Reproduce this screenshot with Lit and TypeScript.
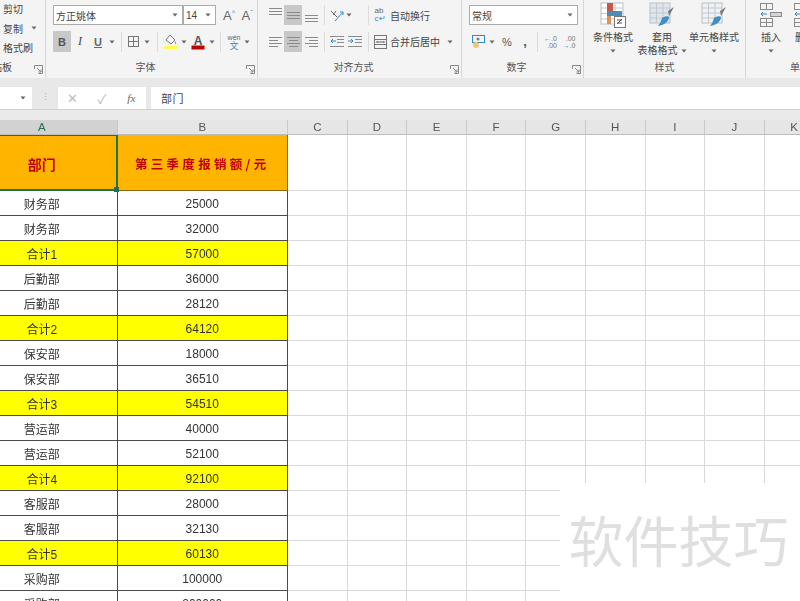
import { LitElement, html, svg, css } from "lit";
import { customElement } from "lit/decorators.js";

const caret = html`<svg width="6" height="4" viewBox="0 0 6 4"><path d="M0.5 0.5h5L3 3.5z" fill="#666"/></svg>`;
const launcher = html`<svg width="9" height="9" viewBox="0 0 9 9" fill="none" stroke="#888"><path d="M0.5 4V0.5H8.5V8.5H4.500"/><path d="M3 3l4 4M7 4.500V7H4.500"/></svg>`;

const vAlign = (top: number) => html`<svg width="13" height="14" viewBox="0 0 13 14" stroke="#8a8a8a" fill="none"><path d="M0 ${top}.5H13M0 ${top + 3}.5H13M0 ${top + 6}.5H13"/></svg>`;
const hAlign = (kind: "l" | "c" | "r") => {
  const a = kind === "l" ? "M0 2.5H13M0 5.5H9M0 8.5H13M0 11.5H9" : kind === "c" ? "M0 2.5H13M2 5.5H11M0 8.5H13M2 11.5H11" : "M0 2.5H13M4 5.5H13M0 8.5H13M4 11.5H13";
  return html`<svg width="13" height="14" viewBox="0 0 13 14" stroke="#8a8a8a" fill="none">${svg`<path d=${a}/>`}</svg>`;
};
const indent = (flip: boolean) => html`<svg width="14" height="13" viewBox="0 0 14 13" fill="none" stroke="#8a8a8a"><path d="M0 1.5H14M7 4.5H14M7 7.5H14M0 11.5H14"/><path d=${flip ? "M0 6h5M3 4l2 2-2 2" : "M1 6h5M3 4L1 6l2 2"} stroke="#2e8bc9"/></svg>`;
const borders = html`<svg width="13" height="13" viewBox="0 0 13 13" fill="none" stroke="#777"><rect x="1.5" y="1.5" width="10" height="10"/><path d="M6.5 1.5v10M1.5 6.5h10"/></svg>`;
const fill = html`<svg width="15" height="16" viewBox="0 0 15 16" fill="none"><path d="M7 1l5 5-4 4-5-4z" stroke="#777" fill="#f7f7f7"/><path d="M12 7c1 1.500 1.500 2 1 3-1 0-1.500-1-1-3z" fill="#888"/><rect x="1" y="12" width="13" height="3" fill="#ffff4d"/></svg>`;
const color = html`<svg width="14" height="16" viewBox="0 0 14 16"><text x="7" y="10.500" text-anchor="middle" font-size="12" font-family="Liberation Sans" font-weight="700" fill="#555">A</text><rect x="0.500" y="11.500" width="13" height="4" fill="#c00000"/></svg>`;
const wen = html`<span class="wen"><span class="wen-top">wén</span><span class="wen-bot">文</span></span>`;
const orient = html`<svg width="14" height="13" viewBox="0 0 14 13" fill="none"><path d="M1 2l6 6M3 6l3-4" stroke="#666"/><path d="M5 12L13 3M13 3h-3M13 3v3" stroke="#2e8bc9"/></svg>`;
const wrap = html`<span class="wrap-ic"><span>ab</span><span class="wrap-c">c↵</span></span>`;
const merge = html`<svg width="13" height="14" viewBox="0 0 13 14" fill="none" stroke="#777"><rect x="0.500" y="0.500" width="12" height="13"/><path d="M0.500 4.500H12.500M0.500 9.500H12.500"/><path d="M3 7H10M3 6v2M10 6v2" stroke="#666"/></svg>`;
const currency = html`<svg width="15" height="15" viewBox="0 0 15 15" fill="none"><rect x="1.500" y="1.500" width="12" height="7" stroke="#2e8bc9"/><circle cx="7" cy="5" r="1.500" fill="#7a7a7a"/><circle cx="5" cy="11" r="3" fill="#eec877"/></svg>`;
const decUp = html`<span class="dec"><span><b class="arr">←</b>.0</span><span>.00</span></span>`;
const decDown = html`<span class="dec"><span>.00</span><span><b class="arr">→</b>.0</span></span>`;

const condFmt = html`<svg width="26" height="26" viewBox="0 0 26 26"><g stroke="#b9c0c4" fill="#fff"><rect x="1" y="1" width="22" height="21"/></g>
  <path d="M1 6H23M1 11.500H23M1 17H23M7.500 1V22M15 1V22" stroke="#c3c8cc" fill="none"/>
  <rect x="7" y="1" width="6" height="9" fill="#c9564b"/><rect x="7" y="9" width="15" height="5" fill="#4d8bb8"/><rect x="7" y="14" width="4" height="8" fill="#d9925a"/>
  <rect x="14.500" y="14.500" width="11" height="11" fill="#fff" stroke="#777"/><path d="M17 22l5-5M17 18h5M17 21h5" stroke="#555" fill="none"/></svg>`;
const brush = (fillc: string) => html`<svg width="26" height="26" viewBox="0 0 26 26"><rect x="1" y="1" width="20" height="20" fill="${fillc}" stroke="#b9c0c4"/>
  <path d="M1 6H21M1 11H21M1 16H21M7.500 1V21M14 1V21" stroke="#c3c8cc" fill="none"/>
  <path d="M19 9l6-4-5 9z" fill="#7a7a7a"/><path d="M13 16c3-2 6-2 7-1 0 4-4 8-11 9 2-2 3-5 4-8z" fill="#3f8fc4"/></svg>`;
const insert = html`<svg width="24" height="26" viewBox="0 0 24 26" fill="none" stroke="#8b8b8b"><rect x="1.500" y="1.500" width="12" height="6"/><path d="M7.500 1.500v6"/><rect x="1.500" y="16.500" width="12" height="8"/><path d="M7.500 16.500v8M1.500 20.500h12"/><path d="M2 12h6M4 10l-2 2 2 2" stroke="#2e8bc9"/><rect x="11.500" y="10.500" width="11" height="4" fill="#cfd6dc"/></svg>`;

interface Row { a: string; b: string; sum?: boolean }
const rows: Row[] = [
  { a: "财务部", b: "25000" }, { a: "财务部", b: "32000" }, { a: "合计1", b: "57000", sum: true },
  { a: "后勤部", b: "36000" }, { a: "后勤部", b: "28120" }, { a: "合计2", b: "64120", sum: true },
  { a: "保安部", b: "18000" }, { a: "保安部", b: "36510" }, { a: "合计3", b: "54510", sum: true },
  { a: "营运部", b: "40000" }, { a: "营运部", b: "52100" }, { a: "合计4", b: "92100", sum: true },
  { a: "客服部", b: "28000" }, { a: "客服部", b: "32130" }, { a: "合计5", b: "60130", sum: true },
  { a: "采购部", b: "100000" }, { a: "采购部", b: "200000" },
];
const emptyCols = "CDEFGHIJK".split("");

@customElement("app-root")
export class AppRoot extends LitElement {
  static styles = css`
    :host { display: block; width: 800px; height: 601px; overflow: hidden; position: relative; background: #fff;
      font-family: "Liberation Sans", "Noto Sans CJK SC", sans-serif; color: #444; font-size: 10px; }
    .page { width: 800px; height: 601px; overflow: hidden; position: relative; filter: blur(0.35px); }
    .ribbon { display: flex; height: 78px; background: #f4f4f4; }
    .group { position: relative; box-sizing: border-box; height: 78px; border-right: 1px solid #d6d6d6; flex: none; }
    .g-clip { width: 46px; }
    .g-font { width: 212px; padding-left: 7px; }
    .g-align { width: 204px; padding-left: 8px; }
    .g-num { width: 122px; padding-left: 7px; }
    .g-style { width: 162px; padding-left: 4px; }
    .g-cell { width: 118px; border-right: 0; padding-left: 8px; }
    .row1 { display: flex; align-items: center; height: 20px; margin-top: 5px; }
    .row2 { display: flex; align-items: center; height: 21px; margin-top: 6px; }
    .t { display: flex; align-items: center; justify-content: center; flex: none; height: 100%; box-sizing: border-box; }
    .t.active { background: #c8c8c8; }
    .t.start { justify-content: flex-start; white-space: nowrap; }
    .sep { width: 1px; height: 20px; background: #dcdcdc; }
    .select { box-sizing: border-box; height: 20px; background: #fff; border: 1px solid #ababab; display: flex; align-items: center; justify-content: space-between; padding: 0 4px 0 2px; flex: none; }
    .f-sel { width: 130px; }
    .s-sel { width: 33px; }
    .n-sel { width: 109px; }
    .bigA { font-size: 13px; color: #666; }
    .bigA sup { font-size: 7px; color: #2e8bc9; line-height: 0; }
    .b { font-weight: 700; font-size: 11px; font-family: "Liberation Sans", sans-serif; color: #555; }
    .i { font-style: italic; font-size: 12px; font-family: "Liberation Serif", serif; }
    .u { text-decoration: underline; font-size: 11px; font-weight: 700; color: #666; }
    .label { position: absolute; left: 0; right: 12px; top: 61px; text-align: center; font-size: 10px; line-height: 14px; color: #555; }
    .label.mid { right: 0; }
    .launch { position: absolute; right: 2px; bottom: 4px; display: flex; }
    .clip-wrap { margin-top: -1px; }
    .clip-item { display: flex; align-items: center; height: 19.500px; padding-left: 3px; white-space: nowrap; gap: 8px; }
    .clip-cut { position: absolute; left: -8px; top: 61px; line-height: 14px; }
    .wen { display: flex; flex-direction: column; align-items: center; line-height: 8px; }
    .wen-top { font-size: 7px; color: #666; }
    .wen-bot { font-size: 9px; color: #2e8bc9; }
    .wrap-ic { display: flex; flex-direction: column; font-size: 8px; line-height: 8px; color: #666; }
    .wrap-c { color: #2e8bc9; }
    .pct { font-size: 11px; color: #555; }
    .comma { font-size: 13px; font-weight: 700; color: #555; }
    .dec { display: flex; flex-direction: column; font-size: 7px; line-height: 7px; color: #777; text-align: right; }
    .arr { color: #2e8bc9; font-weight: 400; }
    .bigs { display: flex; }
    .big { flex: none; display: flex; flex-direction: column; align-items: center; height: 60px; padding-top: 2px; box-sizing: border-box; }
    .w50 { width: 50px; } .w48 { width: 48px; } .w56 { width: 56px; } .w34 { width: 34px; }
    .big-ic { height: 27px; display: flex; }
    .big-t { margin-top: 2px; line-height: 13px; white-space: nowrap; }
    .big-c { line-height: 11px; display: flex; align-items: center; gap: 3px; white-space: nowrap; height: 13px; justify-content: center; }

    .fbar { height: 32px; background: #e8e8e8; box-sizing: border-box; padding-top: 9px; display: flex; border-bottom: 1px solid #d0d0d0; }
    .name { width: 32px; height: 22px; background: #fff; display: flex; align-items: center; justify-content: flex-end; padding-right: 6px; box-sizing: border-box; flex: none; }
    .dots { width: 26px; flex: none; text-align: center; color: #aaa; line-height: 20px; font-size: 9px; }
    .btns { width: 88px; height: 22px; background: #fff; flex: none; display: flex; align-items: center; color: #bbb; font-size: 13px; }
    .btns span { width: 29.330px; text-align: center; }
    .btns .fx { font-family: "Liberation Serif", serif; font-style: italic; color: #666; font-size: 11px; }
    .input { margin-left: 5px; flex: 1; height: 22px; background: #fff; display: flex; align-items: center; padding-left: 10px; font-size: 11px; color: #444; letter-spacing: .6px; }
    .gap { height: 10px; background: #eaeaea; }

    .sheet { display: grid; width: 833px; margin-left: -33px; position: relative;
      grid-template-columns: 150.500px 170.500px repeat(9, 59.600px);
      grid-template-rows: 15px 56px repeat(17, 25px); }
    .h { background: #e6e6e6; border-right: 1px solid #c9c9c9; border-bottom: 1px solid #bdbdbd; box-sizing: border-box; text-align: center; line-height: 15px; font-size: 11.500px; color: #555; }
    .h.sel { background: #d2d2d2; color: #217346; }
    .c { box-sizing: border-box; border-right: 1px solid #dadada; border-bottom: 1px solid #dadada; }
    .d { box-sizing: border-box; border-right: 1.500px solid #4a4a4a; border-bottom: 1.500px solid #4a4a4a; background: #fff; display: flex; align-items: center; justify-content: center; font-size: 12px; color: #333; }
    .d.num { padding-top: 2px; }
    .d.sum { background: #ffff00; }
    .d.top { background: #ffb400; border-bottom-color: #8a6a10; border-right-color: #8a6a10; color: #c00000; font-weight: 700; font-family: "Noto Sans CJK SC", sans-serif; padding-top: 2px; }
    .top-a { font-size: 14px; letter-spacing: 0; }
    .top-b { font-size: 12.500px; letter-spacing: 3.300px; white-space: nowrap; }
    .selbox { position: absolute; left: 0; top: 15px; width: 151px; height: 56px; box-sizing: border-box; border: 2px solid #217346; border-top-width: 1px; pointer-events: none; }
    .handle { position: absolute; right: -3px; bottom: -3px; width: 5px; height: 5px; background: #217346; }
    .mark { position: absolute; left: 560px; top: 483px; width: 240px; height: 118px; background: #fff; display: flex; justify-content: center; align-items: flex-start; }
    .mark span { font-family: "Noto Sans CJK SC", sans-serif; font-size: 55px; line-height: 60px; margin-top: 25px; margin-left: -3px; color: #dfdfdf; white-space: nowrap; }
  `;

  private t(w: number, content: unknown = "", cls = "") {
    return html`<div class="t ${cls}" style="width:${w}px">${content}</div>`;
  }
  private sep(w: number) {
    return html`<div class="t" style="width:${w}px"><div class="sep"></div></div>`;
  }

  render() {
    return html`<div class="page">
      <div class="ribbon">
        <div class="group g-clip">
          <div class="clip-wrap">
            <div class="clip-item">剪切</div>
            <div class="clip-item">复制 ${caret}</div>
            <div class="clip-item">格式刷</div>
          </div>
          <div class="clip-cut">贴板</div>
          <div class="launch">${launcher}</div>
        </div>

        <div class="group g-font">
          <div class="row1">
            <div class="select f-sel"><span>方正姚体</span>${caret}</div>
            <div class="select s-sel"><span>14</span>${caret}</div>
            ${this.t(6)}
            ${this.t(14, html`<span class="bigA">A<sup>^</sup></span>`)}
            ${this.t(4)}
            ${this.t(14, html`<span class="bigA">A<sup>ˇ</sup></span>`)}
          </div>
          <div class="row2">
            ${this.t(18, html`<span class="b">B</span>`, "active")}
            ${this.t(18, html`<span class="i">I</span>`)}
            ${this.t(18, html`<span class="u">U</span>`)}
            ${this.t(9, caret)}
            ${this.sep(10)}
            ${this.t(15, borders)}
            ${this.t(12, caret)}
            ${this.sep(8)}
            ${this.t(19, fill)}
            ${this.t(7, caret)}
            ${this.t(21, color)}
            ${this.t(7, caret)}
            ${this.sep(10)}
            ${this.t(18, wen)}
            ${this.t(8, caret)}
          </div>
          <div class="label">字体</div>
          <div class="launch">${launcher}</div>
        </div>

        <div class="group g-align">
          <div class="row1">
            ${this.t(18, vAlign(0))}
            ${this.t(18, vAlign(4), "active")}
            ${this.t(18, vAlign(7))}
            ${this.sep(8)}
            ${this.t(17, orient)}
            ${this.t(8, caret)}
            ${this.t(11)}
            ${this.sep(8)}
            ${this.t(16, wrap)}
            ${this.t(2)}
            ${this.t(60, "自动换行", "start")}
          </div>
          <div class="row2">
            ${this.t(18, hAlign("l"))}
            ${this.t(18, hAlign("c"), "active")}
            ${this.t(18, hAlign("r"))}
            ${this.sep(8)}
            ${this.t(17, indent(false))}
            ${this.t(19, indent(true))}
            ${this.sep(8)}
            ${this.t(16, merge)}
            ${this.t(2)}
            ${this.t(55, "合并后居中", "start")}
            ${this.t(10, caret)}
          </div>
          <div class="label">对齐方式</div>
          <div class="launch">${launcher}</div>
        </div>

        <div class="group g-num">
          <div class="row1"><div class="select n-sel"><span>常规</span>${caret}</div></div>
          <div class="row2">
            ${this.t(18, currency)}
            ${this.t(10, caret)}
            ${this.t(20, html`<span class="pct">%</span>`)}
            ${this.t(16, html`<span class="comma">,</span>`)}
            ${this.sep(8)}
            ${this.t(19, decUp)}
            ${this.t(18, decDown)}
          </div>
          <div class="label">数字</div>
          <div class="launch">${launcher}</div>
        </div>

        <div class="group g-style">
          <div class="bigs">
            <div class="big w50"><div class="big-ic">${condFmt}</div><div class="big-t">条件格式</div><div class="big-c">${caret}</div></div>
            <div class="big w48"><div class="big-ic">${brush("#dfe6ee")}</div><div class="big-t">套用</div><div class="big-c">表格格式 ${caret}</div></div>
            <div class="big w56"><div class="big-ic">${brush("#eef2f6")}</div><div class="big-t">单元格样式</div><div class="big-c">${caret}</div></div>
          </div>
          <div class="label mid">样式</div>
        </div>

        <div class="group g-cell">
          <div class="bigs">
            <div class="big w34"><div class="big-ic">${insert}</div><div class="big-t">插入</div><div class="big-c">${caret}</div></div>
            <div class="big w34"><div class="big-ic">${insert}</div><div class="big-t">删除</div><div class="big-c">${caret}</div></div>
          </div>
          <div class="label mid">单元格</div>
        </div>
      </div>

      <div class="fbar">
        <div class="name">${caret}</div>
        <div class="dots">⋮</div>
        <div class="btns"><span>✕</span><span>✓</span><span class="fx">fx</span></div>
        <div class="input">部门</div>
      </div>
      <div class="gap"></div>

      <div class="sheet">
        <div class="h sel">A</div><div class="h">B</div>
        ${emptyCols.map((c) => html`<div class="h">${c}</div>`)}

        <div class="d top top-a">部门</div>
        <div class="d top top-b">第三季度报销额/元</div>
        ${emptyCols.map(() => html`<div class="c"></div>`)}

        ${rows.map((r) => html`
          <div class="d ${r.sum ? "sum" : ""}">${r.a}</div>
          <div class="d num ${r.sum ? "sum" : ""}">${r.b}</div>
          ${emptyCols.map(() => html`<div class="c"></div>`)}
        `)}
        <div class="selbox"><div class="handle"></div></div>
      </div>

      <div class="mark"><span>软件技巧</span></div>
    </div>`;
  }
}
